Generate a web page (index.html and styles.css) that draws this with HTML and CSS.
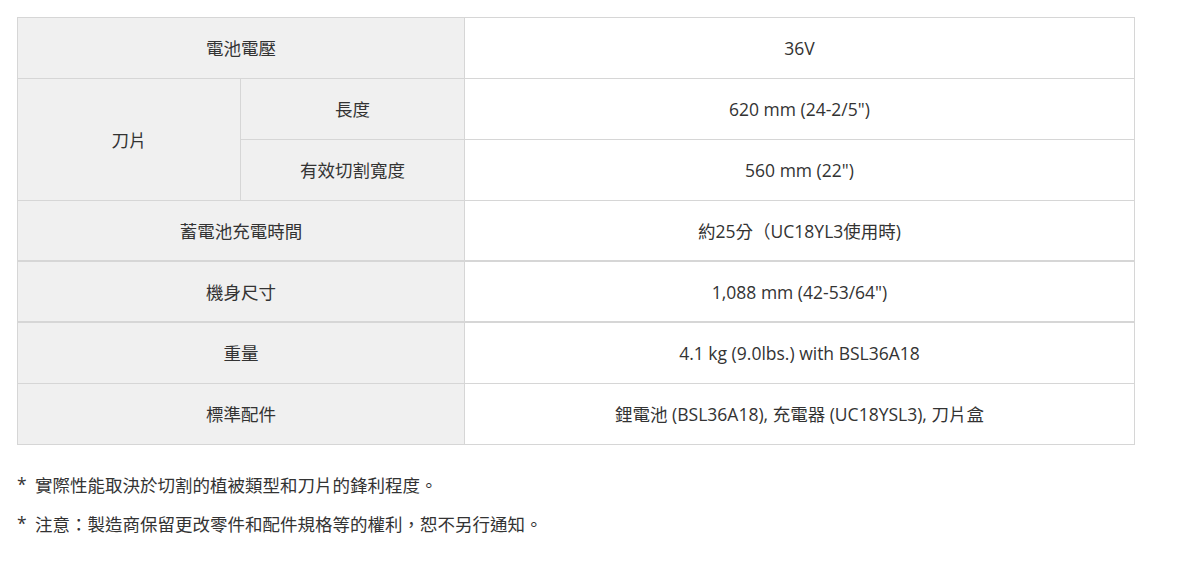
FILE: index.html
```html
<!DOCTYPE html>
<html lang="zh-Hant">
<head>
<meta charset="utf-8">
<link rel="stylesheet" href="styles.css">
</head>
<body>
<div class="page">
  <table class="spec">
    <colgroup>
      <col class="c1"><col class="c2"><col class="c3">
    </colgroup>
    <tbody>
      <tr><th colspan="2">電池電壓</th><td>36V</td></tr>
      <tr><th rowspan="2">刀片</th><th>長度</th><td>620 mm (24-2/5")</td></tr>
      <tr><th>有效切割寬度</th><td>560 mm (22")</td></tr>
      <tr class="thick"><th colspan="2">蓄電池充電時間</th><td>約25分（UC18YL3使用時)</td></tr>
      <tr class="thick"><th colspan="2">機身尺寸</th><td>1,088 mm (42-53/64")</td></tr>
      <tr><th colspan="2">重量</th><td>4.1 kg (9.0lbs.) with BSL36A18</td></tr>
      <tr><th colspan="2">標準配件</th><td>鋰電池 (BSL36A18), 充電器 (UC18YSL3), 刀片盒</td></tr>
    </tbody>
  </table>
  <ul class="notes">
    <li>實際性能取決於切割的植被類型和刀片的鋒利程度。</li>
    <li>注意：製造商保留更改零件和配件規格等的權利，恕不另行通知。</li>
  </ul>
</div>
</body>
</html>
```
FILE: styles.css
```css
html, body {
  margin: 0;
  padding: 0;
  background: #fff;
}
body {
  font-family: "Open Sans", "Noto Sans CJK TC", sans-serif;
  font-size: 17.5px;
  color: #333;
}
.page {
  padding: 17px 0 0 17px;
  width: 1118px;
}
.spec {
  width: 1118px;
  border-collapse: collapse;
  table-layout: fixed;
}
.c1 { width: 223px; }
.c2 { width: 224px; }
.spec th, .spec td {
  border: 1px solid #d6d6d6;
  height: 60px;
  padding: 0;
  text-align: center;
  vertical-align: middle;
  font-weight: normal;
  line-height: 24px;
}
.spec th {
  background: #f0f0f0;
}
.spec td {
  background: #fff;
}
.spec tr.thick th, .spec tr.thick td {
  border-bottom: 2px solid #d6d6d6;
  height: 59px;
}
.notes {
  list-style: none;
  margin: 28px 0 0 0;
  padding: 0;
}
.notes li {
  position: relative;
  padding-left: 18px;
  line-height: 24px;
  margin-bottom: 15px;
}
.notes li::before {
  content: "*";
  position: absolute;
  left: 0;
  top: -1px;
}
```
